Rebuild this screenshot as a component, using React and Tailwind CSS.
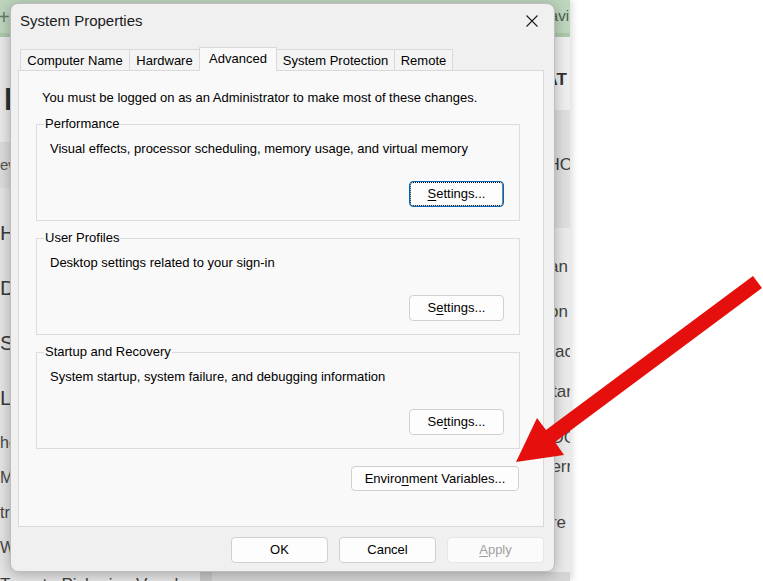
import React from 'react';

const tabs = [
  { label: 'Computer Name', w: 'w-[110px]' },
  { label: 'Hardware', w: 'w-[71px]' },
  { label: 'Advanced', w: 'w-[78px]', active: true },
  { label: 'System Protection', w: 'w-[119px]' },
  { label: 'Remote', w: 'w-[59px]' },
];

const U = ({ children }) => <span className="underline underline-offset-2">{children}</span>;

const Btn = ({ className = '', focused, disabled, children }) => (
  <button
    type="button"
    disabled={disabled}
    className={`flex shrink-0 items-center justify-center rounded-[4px] border text-[13px] leading-[16px] ${
      focused
        ? 'border-[#0067c0] bg-[#fdfdfd] text-black outline-1 outline-dotted outline-black -outline-offset-2'
        : disabled
        ? 'border-[#e6e6e6] bg-[#fbfbfb] text-[#a0a0a0]'
        : 'border-[#d0d0d0] bg-[#fdfdfd] text-black'
    } ${className}`}
  >
    {children}
  </button>
);

const Group = ({ title, text, className = '', children }) => (
  <fieldset className={`ml-[17px] w-[484px] min-w-0 border border-[#dcdcdc] pb-[13px] ${className}`}>
    <legend className="ml-[7px] px-[1px] text-[13px] leading-[16px] text-black">{title}</legend>
    <p className="mt-[9px] pl-[13px] text-[13px] leading-[16px] text-black">{text}</p>
    <div className="mt-[24px] flex justify-end pr-[15px]">{children}</div>
  </fieldset>
);

const BackgroundApp = () => (
  <div className="flex h-full w-[570px] flex-col overflow-hidden bg-[#e7e7e7] shadow-[3px_0_6px_rgba(0,0,0,0.12)]">
    <div className="flex h-[37px] shrink-0 items-center justify-between border-b-4 border-[#adc8ac] bg-[#bed6bd] text-[15px] text-[#4b5b4b]">
      <span className="-ml-[2px] text-[20px] leading-none text-[#6a7a6a]">+</span>
      <span className="pr-[1px]">Navi</span>
    </div>
    <div className="flex min-h-0 flex-1">
      {/* left column */}
      <div className="flex w-[200px] shrink-0 flex-col bg-[#e4e4e4]">
        <div className="flex h-[105px] shrink-0 items-center bg-[#e9e9e9] pl-[4px] pt-[8px] text-[30px] font-bold text-[#20363c]">
          popular
        </div>
        <div className="flex h-[46px] shrink-0 items-center bg-[#dcdcdc] text-[15px] text-[#555]">ews</div>
        <div className="shrink-0 pt-[17px]">
          {['Home', 'Dining', 'Sports', 'Living'].map((t) => (
            <div key={t} className="flex h-[55px] items-center text-[21px] font-medium text-[#3a3a3a]">
              {t}
            </div>
          ))}
          {['hello', 'Money', 'travel', 'Weekend'].map((t) => (
            <div key={t} className="flex h-[35px] items-center text-[16px] text-[#444]">
              {t}
            </div>
          ))}
          <div className="flex h-[40px] items-center whitespace-nowrap text-[17px] text-[#3d3d3d]">
            Torento Pickering Vaughan
          </div>
        </div>
      </div>
      <div className="w-[12px] shrink-0 bg-[#c6c6c6]" />
      {/* main column */}
      <div className="flex flex-1 flex-col bg-[#ebebeb]">
        <div className="flex h-[73px] shrink-0 items-center justify-end bg-[#efefef] pt-[13px] pr-[3px] text-[17px] font-semibold text-[#333]">
          CAT
        </div>
        <div className="flex h-[118px] shrink-0 items-center justify-end bg-[#dfdfdf] pb-[8px] text-[17px] text-[#3a3a3a]">
          <span className="-mr-[3px]">HO</span>
        </div>
        <div className="flex flex-1 flex-col text-[17px] leading-[24px] text-[#444]">
          <div className="mt-[27px] text-right pr-[2px]">Plan</div>
          <div className="mt-[21px] text-right pr-[2px]">Option</div>
          <div className="mt-[16px] text-right -mr-[3px]">Trac</div>
          <div className="mt-[16px] text-right -mr-[2px]">Ontar</div>
          <div className="mt-[22px] text-right -mr-[6px]">LOC</div>
          <div className="mt-[5px] text-right -mr-[6px]">Intern</div>
          <div className="mt-[32px] text-right pr-[4px]">More</div>
        </div>
        <div className="h-[9px] shrink-0 bg-[#d5d5d5]" />
      </div>
    </div>
  </div>
);

const SystemProperties = () => (
  <div className="absolute left-[10px] top-[3px] w-[545px] rounded-[8px] border border-[#bdbdbd] bg-[#f0f0f0] pb-[8px] shadow-[0_2px_14px_rgba(0,0,0,0.28)]">
    {/* title bar */}
    <div className="flex h-[33px] items-center justify-between pl-[9px] pr-[16px]">
      <span className="pt-[1px] text-[15px] text-[#1b1b1b]">System Properties</span>
      <svg width="12" height="12" viewBox="0 0 12 12">
        <path d="M0.5 0.5 L11.5 11.5 M11.5 0.5 L0.5 11.5" stroke="#1b1b1b" strokeWidth="1.1" />
      </svg>
    </div>

    {/* tabs */}
    <div className="ml-[9px] mt-[10px] flex h-[23px] items-end">
      {tabs.map((t, i) => (
        <div
          key={t.label}
          className={`${t.w} ${i === 0 ? '' : '-ml-px'} flex items-center justify-center border-x border-t border-[#d9d9d9] text-[13px] text-black ${
            t.active ? 'relative z-10 -mb-px h-[24px] bg-[#f9f9f9] pb-[2px]' : 'h-[21px] bg-[#f4f4f4] pt-[1px]'
          }`}
        >
          {t.label}
        </div>
      ))}
    </div>

    {/* tab panel */}
    <div className="ml-[7px] flex h-[457px] w-[526px] flex-col border border-[#d9d9d9] bg-[#f9f9f9]">
      <p className="mt-[19px] pl-[23px] text-[13px] leading-[16px] text-black">
        You must be logged on as an Administrator to make most of these changes.
      </p>

      <Group
        className="mt-[10px]"
        title="Performance"
        text="Visual effects, processor scheduling, memory usage, and virtual memory"
      >
        <Btn focused className="h-[26px] w-[95px]">
          <U>S</U>ettings...
        </Btn>
      </Group>

      <Group className="mt-[9px]" title="User Profiles" text="Desktop settings related to your sign-in">
        <Btn className="h-[26px] w-[95px]">
          S<U>e</U>ttings...
        </Btn>
      </Group>

      <Group
        className="mt-[9px]"
        title="Startup and Recovery"
        text="System startup, system failure, and debugging information"
      >
        <Btn className="h-[26px] w-[95px]">
          Se<U>t</U>tings...
        </Btn>
      </Group>

      <div className="mt-[17px] flex justify-end pr-[24px]">
        <Btn className="h-[25px] w-[168px]">
          Enviro<U>n</U>ment Variables...
        </Btn>
      </div>
    </div>

    {/* dialog buttons */}
    <div className="mt-[10px] flex justify-end gap-[11px] pr-[10px]">
      <Btn className="h-[26px] w-[97px]">OK</Btn>
      <Btn className="h-[26px] w-[97px]">Cancel</Btn>
      <Btn disabled className="h-[26px] w-[97px]">
        <U>A</U>pply
      </Btn>
    </div>
  </div>
);

const Arrow = () => (
  <svg className="pointer-events-none absolute left-0 top-0" width="763" height="581" viewBox="0 0 763 581">
    <polygon points="516,462 564,455 555,442 762,288 753,276 546,430 537,418" fill="#e5100d" />
  </svg>
);

export default function App() {
  return (
    <div className="relative h-[581px] w-[763px] overflow-hidden bg-white font-['Liberation_Sans',Arial,sans-serif]">
      <BackgroundApp />
      <SystemProperties />
      <Arrow />
    </div>
  );
}
